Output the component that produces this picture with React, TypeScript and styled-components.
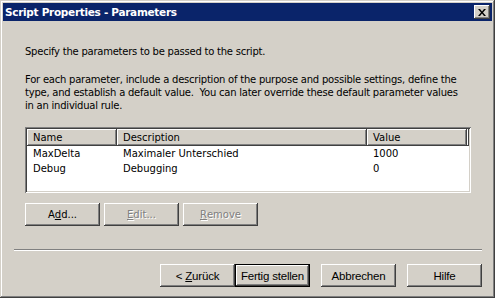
import styled, { createGlobalStyle, css } from "styled-components";

const GlobalStyle = createGlobalStyle`
  html, body {
    margin: 0;
    padding: 0;
    background: #d4d0c8;
  }
`;

const FACE = "#d4d0c8";
const SHADOW = "#808080";
const DARK = "#404040";

const raised = css`
  box-shadow: inset -1px -1px ${DARK}, inset 1px 1px #fff,
    inset -2px -2px ${SHADOW}, inset 2px 2px ${FACE};
`;

const Window = styled.div`
  box-sizing: border-box;
  width: 495px;
  height: 298px;
  padding: 3px;
  background: ${FACE};
  display: flex;
  flex-direction: column;
  box-shadow: inset -1px -1px ${DARK}, inset 1px 1px ${FACE},
    inset -2px -2px ${SHADOW}, inset 2px 2px #fff;
  font-family: "DejaVu Sans", sans-serif;
  font-size: 10px;
  color: #000;
`;

const TitleBar = styled.div`
  height: 18px;
  background: #0a246a;
  display: flex;
  align-items: center;
  justify-content: space-between;
  padding: 0 2px;
`;

const Title = styled.span`
  color: #fff;
  font-family: "DejaVu Sans", sans-serif;
  font-weight: bold;
  font-size: 10.5px;
  letter-spacing: -0.3px;
`;

const CloseButton = styled.div`
  box-sizing: border-box;
  width: 16px;
  height: 14px;
  background: ${FACE};
  ${raised};
  display: flex;
  align-items: center;
  justify-content: center;
`;

const Body = styled.div`
  display: flex;
  flex-direction: column;
  padding: 24px 10px 0 22px;
`;

const Para = styled.p<{ $gap: number }>`
  margin: 0 0 ${(p) => p.$gap}px 0;
  line-height: 13px;
  letter-spacing: -0.23px;
`;

const ListBox = styled.div`
  box-sizing: border-box;
  width: 446px;
  height: 66px;
  padding: 2px;
  background: #fff;
  box-shadow: inset 1px 1px ${SHADOW}, inset -1px -1px #fff,
    inset 2px 2px ${DARK}, inset -2px -2px ${FACE};
  display: flex;
  flex-direction: column;
`;

const HeaderRow = styled.div`
  display: flex;
  height: 17px;
`;

const HeaderCell = styled.div<{ $w?: number }>`
  box-sizing: border-box;
  ${(p) => (p.$w ? `width: ${p.$w}px; flex-shrink: 0; padding: 0 6px;` : "flex: 1;")}
  height: 17px;
  background: ${FACE};
  ${raised};
  display: flex;
  align-items: center;
`;

const Row = styled.div`
  display: flex;
  height: 15px;
  align-items: center;
`;

const Cell = styled.div<{ $w: number }>`
  width: ${(p) => p.$w}px;
  flex-shrink: 0;
  padding: 0 6px;
  box-sizing: border-box;
  white-space: nowrap;
`;

const ButtonRow = styled.div`
  display: flex;
  gap: 4px;
  margin-top: 10px;
`;

const Button = styled.div<{ $disabled?: boolean; $default?: boolean }>`
  box-sizing: border-box;
  width: 75px;
  height: 23px;
  background: ${FACE};
  display: flex;
  align-items: center;
  justify-content: center;
  ${raised};
  ${(p) =>
    p.$disabled &&
    css`
      color: ${SHADOW};
      text-shadow: 1px 1px #fff;
    `}
  ${(p) =>
    p.$default &&
    css`
      border: 1px solid #000;
    `}
  u {
    text-decoration: underline;
    text-underline-offset: 1px;
  }
`;

const WizardButton = styled(Button)`
  font-family: "Liberation Sans", Arial, sans-serif;
  font-size: 11.5px;
  letter-spacing: -0.2px;
`;

const Separator = styled.div`
  margin: 23px 10px 0 11px;
  height: 0;
  border-top: 1px solid ${SHADOW};
  border-bottom: 1px solid #fff;
`;

const Footer = styled.div`
  display: flex;
  justify-content: flex-end;
  gap: 11px;
  padding: 13px 10px 0 0;
`;

const ButtonPair = styled.div`
  display: flex;
`;

export default function App() {
  return (
    <>
      <GlobalStyle />
      <Window>
        <TitleBar>
          <Title>Script Properties - Parameters</Title>
          <CloseButton>
            <svg width="8" height="7" viewBox="0 0 8 7">
              <path d="M0 0h2l2 2.5L6 0h2L5 3.5 8 7H6L4 4.5 2 7H0l3-3.5z" fill="#000" />
            </svg>
          </CloseButton>
        </TitleBar>
        <Body>
          <Para $gap={15}>Specify the parameters to be passed to the script.</Para>
          <Para $gap={15}>
            For each parameter, include a description of the purpose and possible settings, define the
            <br />
            type, and establish a default value.&nbsp; You can later override these default parameter values
            <br />
            in an individual rule.
          </Para>
          <ListBox>
            <HeaderRow>
              <HeaderCell $w={90}>Name</HeaderCell>
              <HeaderCell $w={250}>Description</HeaderCell>
              <HeaderCell $w={100}>Value</HeaderCell>
              <HeaderCell />
            </HeaderRow>
            <Row>
              <Cell $w={90}>MaxDelta</Cell>
              <Cell $w={250}>Maximaler Unterschied</Cell>
              <Cell $w={100}>1000</Cell>
            </Row>
            <Row>
              <Cell $w={90}>Debug</Cell>
              <Cell $w={250}>Debugging</Cell>
              <Cell $w={100}>0</Cell>
            </Row>
          </ListBox>
          <ButtonRow>
            <Button>
              A<u>d</u>d...
            </Button>
            <Button $disabled>
              <u>E</u>dit...
            </Button>
            <Button $disabled>
              <u>R</u>emove
            </Button>
          </ButtonRow>
        </Body>
        <Separator />
        <Footer>
          <ButtonPair>
            <WizardButton>
              &lt;&nbsp;<u>Z</u>urück
            </WizardButton>
            <WizardButton $default>Fertig stellen</WizardButton>
          </ButtonPair>
          <WizardButton>Abbrechen</WizardButton>
          <WizardButton>Hilfe</WizardButton>
        </Footer>
      </Window>
    </>
  );
}
